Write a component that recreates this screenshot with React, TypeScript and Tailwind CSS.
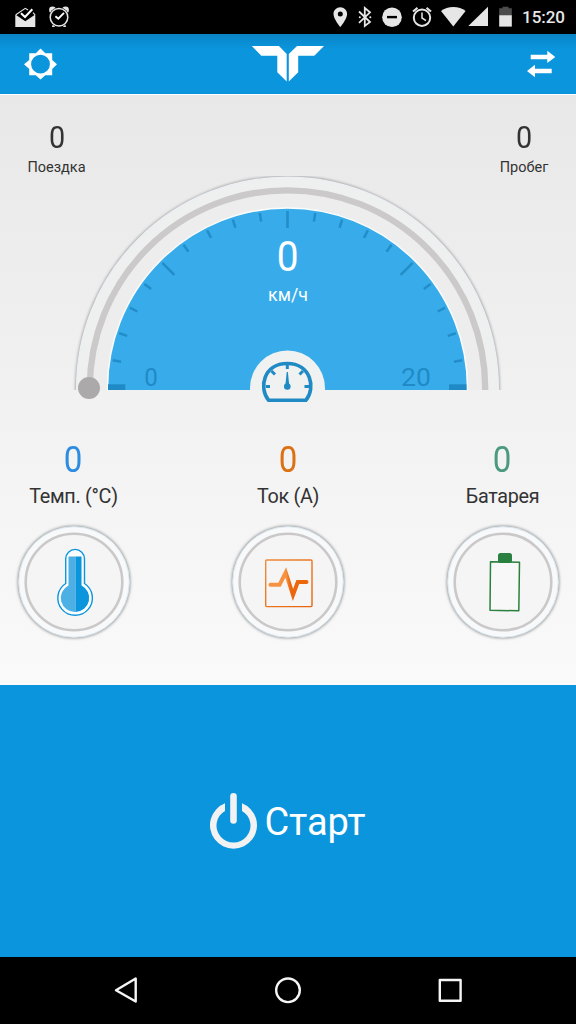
import React, { ReactNode } from 'react'

interface TripValueProps {
    value: string
    label: string
}

interface SensorProps {
    value: string
    label: string
    valueClass: string
    children: ReactNode
}

const CX = 287.5
const CY = 388

const StatusBar = () => (
    <div className="h-[34px] bg-black shrink-0">
        <svg width="576" height="34" viewBox="0 0 576 34" fill="#e6e6e6">
            {/* inbox */}
            <path d="M15.3 14.5L25.3 21.3L35.3 14.5V27H15.3Z" />
            <path d="M15.8 14.8L25.3 8.3L28 10M33 12.6L35 14.8" fill="none" stroke="#e6e6e6" strokeWidth="1.1" />
            <path d="M21 13.2L25 17L32.3 9.3" fill="none" stroke="#fff" strokeWidth="2" />
            {/* alarm with check */}
            <circle cx="52.5" cy="10" r="3.4" />
            <circle cx="65.5" cy="10" r="3.4" />
            <path d="M53 23l-1 4h3zM65 23l1 4h-3z" />
            <circle cx="59" cy="17.3" r="10" fill="#000" />
            <circle cx="59" cy="17.3" r="8.8" fill="#000" stroke="#e6e6e6" strokeWidth="1.5" />
            <path d="M55.4 16.2L58.3 18.7L64 12.8" fill="none" stroke="#fff" strokeWidth="1.9" />
            {/* location */}
            <path fillRule="evenodd" d="M340.3 7.3c-3.8 0-6.8 3-6.8 6.7 0 5 6.8 13 6.8 13s6.8-8 6.8-13c0-3.7-3-6.7-6.8-6.7zm0 4.3a2.5 2.5 0 1 1 0 5 2.5 2.5 0 0 1 0-5z" />
            {/* bluetooth */}
            <path d="M359 11.5L370 22L364.8 26V8L370 12.3L359 22.8" fill="none" stroke="#e6e6e6" strokeWidth="1.8" />
            <circle cx="359.8" cy="17.2" r="1" />
            <circle cx="370.3" cy="17.2" r="1" />
            {/* do not disturb */}
            <circle cx="392" cy="17.2" r="9.8" />
            <rect x="387" y="15.9" width="10" height="2.4" fill="#000" />
            {/* alarm */}
            <g fill="none" stroke="#e6e6e6">
                <circle cx="422" cy="17.7" r="8.2" strokeWidth="2" />
                <path d="M422 12.5v5.5l4 2.6" strokeWidth="1.5" />
                <path d="M413 11.5l4.5-3.6M431 11.5l-4.5-3.6" strokeWidth="2" />
            </g>
            {/* wifi and signal */}
            <path d="M453.3 26.4L441 11c3.4-2.6 7.6-4 12.3-4s9 1.4 12.3 4z" />
            <path d="M468.3 26H488V6.8z" />
            {/* battery */}
            <path d="M499.2 8.2h3.3V6.7h6v1.5h3.3v7h-12.6z" fill="#4d4d4d" />
            <rect x="499.2" y="15.2" width="12.6" height="11.4" />
            <text x="522" y="23" fontFamily="Roboto, sans-serif" fontSize="17" fontWeight="500" textLength="43" fill="#e8e8e8">15:20</text>
        </svg>
    </div>
)

const Header = () => (
    <header className="h-[60px] shrink-0 bg-[#0a95dd] bg-linear-to-b from-[#0a84c5] to-[#0a95dd] to-25%">
        <svg width="576" height="60" viewBox="0 34 576 60" fill="#fff">
            <path fillRule="evenodd" d="M40.5 48.5L45.3 53.3H52.2V60L57 64.2L52.2 69V75.2H45.3L40.5 79.5L35.8 75.2H29.2V69L24 64.2L29.2 60V53.3H35.8ZM40.5 54.8a9.4 9.4 0 1 0 0 18.8 9.4 9.4 0 0 0 0-18.8z" />
            <path d="M251.8 46H279L286.7 54V81.5L277.3 72.3V55.7H261.3Z" />
            <path d="M324 46H297L288.8 54V81.5L298.2 72.3V55.7H314.3Z" />
            <path d="M530.7 54.7H547.3V50.7L555.3 57L547.3 63V59.3H530.7Z" />
            <path d="M551.7 68.7H535V64.7L527 71L535 77.3V73.3H551.7Z" />
        </svg>
    </header>
)

const TripValue = ({ value, label }: TripValueProps) => (
    <div className="w-[60px] flex flex-col items-center text-[#333]">
        <span className="text-[32px] leading-[38px] scale-x-90">{value}</span>
        <span className="text-[14.5px] leading-5 mt-[1.5px] whitespace-nowrap">{label}</span>
    </div>
)

const Ticks = () => (
    <g stroke="#228dc8">
        {Array.from({ length: 19 }, (_, i) => {
            const angle = (i + 1) * 9
            const isMajor = angle % 45 === 0
            return (
                <line
                    key={angle}
                    x1={CX - 177}
                    x2={CX - (isMajor ? 160 : 168.5)}
                    y1={CY}
                    y2={CY}
                    strokeWidth={isMajor ? 2.6 : 2.5}
                    transform={`rotate(${angle} ${CX} ${CY})`}
                />
            )
        })}
    </g>
)

const Speedometer = () => (
    <svg className="mx-auto block shrink-0" width="456" height="230" viewBox="60 176 456 230" fontFamily="Roboto, sans-serif">
        <defs>
            <clipPath id="dial">
                <rect x="60" y="176" width="456" height="214" />
            </clipPath>
            <filter id="soft" x="-5%" y="-5%" width="110%" height="110%">
                <feGaussianBlur stdDeviation="1.5" />
            </filter>
        </defs>
        <g clipPath="url(#dial)">
            <circle cx={CX} cy={CY} r="212" fill="#9b999a" filter="url(#soft)" />
            <circle cx={CX} cy={CY} r="210.8" fill="#eeefef" stroke="#ebf0f4" strokeWidth="1.5" />
            <circle cx={CX} cy={CY} r="197.7" fill="#ededed" stroke="#cbc9c9" strokeWidth="6.3" />
            <circle cx={CX} cy={CY} r="180" fill="#38acea" stroke="#fbfcfc" strokeWidth="1.5" />
            <Ticks />
            <rect x="108" y="384.3" width="17.3" height="6" fill="#208ac6" />
            <rect x="449" y="384.3" width="17.3" height="6" fill="#208ac6" />
            <circle cx={CX} cy={CY} r="37.5" fill="#f0f1f1" />
        </g>
        <circle cx="89" cy="388" r="11" fill="#aca9aa" />

        <text x="276.7" y="270.5" fontSize="42" textLength="21.8" lengthAdjust="spacingAndGlyphs" fill="#fff">0</text>
        <text x="288" y="301" fontSize="17.8" textAnchor="middle" fill="#fff">км/ч</text>
        <text x="144.2" y="385.5" fontSize="26.5" textLength="13.6" lengthAdjust="spacingAndGlyphs" fill="#208ac6">0</text>
        <text x="401" y="385.5" fontSize="26.5" fill="#208ac6">20</text>

        <g stroke="#208ac4" fill="none" strokeWidth="3">
            <path d="M268.5 400.2C258.5 388 263.5 363.5 287.2 363.5S316 388 306 400.2Z" strokeWidth="3.6" />
            <path d="M287.3 364v5M266 386.5h4M304.5 386.5h5M271.5 371l3.5 3.5M303 371l-3.5 3.5" />
        </g>
        <path d="M286.7 372h1.2l1.2 12h-3.6z" fill="#208ac4" />
        <circle cx="287.3" cy="386.5" r="3.3" fill="#208ac4" />
    </svg>
)

const Sensor = ({ value, label, valueClass, children }: SensorProps) => (
    <div className="flex flex-col items-center">
        <span className={`text-[36px] leading-[42px] scale-x-92 ${valueClass}`}>{value}</span>
        <span className="text-[19.8px] leading-6 mt-[4px] tracking-[-0.3px] text-[#333] whitespace-nowrap">{label}</span>
        <svg className="mt-[13px] overflow-visible" width="120" height="120" viewBox="-60 -60 120 120">
            <circle r="56.3" fill="#939496" filter="url(#soft)" />
            <circle r="55.3" fill="#f7f9fa" stroke="#dbe7ee" strokeWidth="1" />
            <circle r="48.3" fill="#f5f5f5" stroke="#cbc8c9" strokeWidth="2.6" />
            {children}
        </svg>
    </div>
)

const ThermometerIcon = () => (
    <g>
        <path d="M-8.3 1.5V-23.2A9.4 9.4 0 0 1 10.5 -23.2V1.5A17.3 17.3 0 1 1 -8.3 1.5Z" fill="#fcfdfd" stroke="#0a95dd" strokeWidth="1.4" />
        <path d="M-5.5 -25.5H1.5V30A14 14 0 0 1 -5.5 3.5Z" fill="#4cb0e4" />
        <path d="M1.5 -25.5H7.5V3.5A14 14 0 0 1 1.5 30Z" fill="#0a95dd" />
    </g>
)

const PulseIcon = () => (
    <g fill="none">
        <defs>
            <linearGradient id="frame" x1="0" y1="0" x2="1" y2="1">
                <stop offset="0" stopColor="#f08b3c" />
                <stop offset="1" stopColor="#e8620a" />
            </linearGradient>
            <linearGradient id="pulse" gradientUnits="userSpaceOnUse" x1="-18" y1="3" x2="19" y2="0">
                <stop offset="0.46" stopColor="#f59342" />
                <stop offset="0.54" stopColor="#ec660c" />
            </linearGradient>
        </defs>
        <rect x="-22.3" y="-22" width="46.3" height="46.6" rx="1" stroke="url(#frame)" strokeWidth="1.4" />
        <path
            d="M-17.5 2.8H-8.5L-2.3 -9.5L5 13L9.8 0H18.5"
            stroke="url(#pulse)"
            strokeWidth="4"
            strokeLinecap="round"
            strokeMiterlimit="10"
        />
    </g>
)

const BatteryIcon = () => (
    <g>
        <path d="M-12.5 -20.3L16.5 -19.8L15.8 28.8L-13 28.3Z" fill="#f8f8f8" stroke="#2a803e" strokeWidth="1.5" strokeLinejoin="round" />
        <rect x="-5" y="-29" width="14" height="10" rx="2.5" fill="#2a803e" />
    </g>
)

const StartButton = () => (
    <button className="h-[272px] shrink-0 bg-[#0a95dd] flex items-center justify-center gap-[6px] text-white">
        <svg width="48" height="58" viewBox="210 792 48 58" fill="#f2f2f2">
            <path d="M225 803.3V810.9A17 17 0 1 0 242 810.9V803.3A23.5 23.5 0 1 1 225 803.3Z" />
            <rect x="230.2" y="793" width="6.6" height="30.7" rx="3.3" />
        </svg>
        <span className="text-[38px] leading-none tracking-[-0.1px] mt-[2px]">Старт</span>
    </button>
)

const NavigationBar = () => (
    <nav className="h-[67px] shrink-0 bg-black">
        <svg width="576" height="67" viewBox="0 957 576 67" fill="none" stroke="#f5f5f5" strokeWidth="2.4" strokeLinejoin="round">
            <path d="M135.7 978.5V1001.5L116 990.3Z" />
            <circle cx="288" cy="990.3" r="11.8" />
            <rect x="439.8" y="980" width="20.8" height="20.8" />
        </svg>
    </nav>
)

export default function App() {
    return (
        <div className="w-[576px] h-[1024px] flex flex-col overflow-hidden font-[Roboto,sans-serif]">
            <StatusBar />
            <Header />
            <main className="h-[591px] shrink-0 flex flex-col border-t border-white bg-linear-to-b from-[#e8e8e8] to-[#fafafa]">
                <div className="h-[81px] shrink-0 pt-[23px] pl-[26.5px] pr-[22px] flex justify-between">
                    <TripValue value="0" label="Поездка" />
                    <TripValue value="0" label="Пробег" />
                </div>
                <Speedometer />
                <div className="grid grid-cols-[120px_120px_120px] justify-between pl-[13.5px] pr-[13.5px] pt-[33px]">
                    <Sensor value="0" label="Темп. (°C)" valueClass="text-[#2d8ce0]">
                        <ThermometerIcon />
                    </Sensor>
                    <Sensor value="0" label="Ток (A)" valueClass="text-[#dd7012]">
                        <PulseIcon />
                    </Sensor>
                    <Sensor value="0" label="Батарея" valueClass="text-[#4b9a7f]">
                        <BatteryIcon />
                    </Sensor>
                </div>
            </main>
            <StartButton />
            <NavigationBar />
        </div>
    )
}
